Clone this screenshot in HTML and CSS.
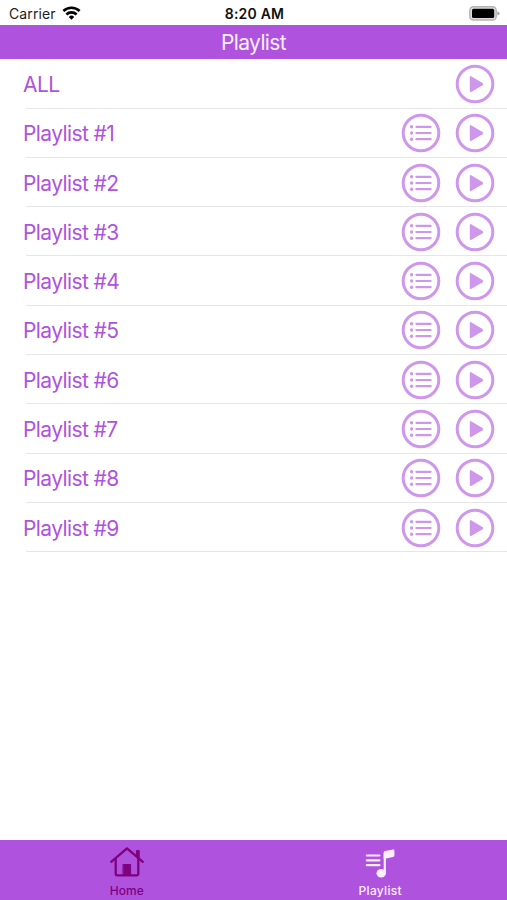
FILE: index.html
```
<!DOCTYPE html>
<html lang="en">
<head>
    <meta charset="UTF-8">
    <meta name="viewport" content="width=device-width, initial-scale=1.0">
    <title>Playlist</title>
    <link rel="stylesheet" href="styles.css">
</head>
<body>
    <svg class="sprite">
        <symbol id="icon-play" viewBox="0 0 40 40">
            <circle cx="20" cy="20" r="17.8" fill="none" stroke="currentColor" stroke-width="3"/>
            <path d="M14.8 13.1v14q0 1.4 1.3.8l11.4-6.6q1.4-1.2 0-2.4l-11.4-6.6q-1.3-.6-1.3.8z" fill="currentColor"/>
        </symbol>
        <symbol id="icon-list" viewBox="0 0 40 40">
            <circle cx="20" cy="20" r="17.8" fill="none" stroke="currentColor" stroke-width="3"/>
            <path d="M15.4 13.8h14.2M15.4 20h14.2M15.4 26.2h14.2" stroke="currentColor" stroke-width="2.2" stroke-linecap="round"/>
            <g fill="currentColor">
                <circle cx="10.6" cy="13.8" r="1.7"/>
                <circle cx="10.6" cy="20" r="1.7"/>
                <circle cx="10.6" cy="26.2" r="1.7"/>
            </g>
        </symbol>
    </svg>

    <div class="status-bar">
        <div class="carrier">
            Carrier
            <svg class="wifi" viewBox="0 0 18 14" fill="none" stroke="#000" stroke-width="2.6">
                <path d="M.9 5a11.6 11.6 0 0 1 16.2 0"/>
                <path d="M3.9 8.5a7.3 7.3 0 0 1 10.2 0"/>
                <path d="M9 13.8l-2.7-2.9a3.9 3.9 0 0 1 5.4 0z" fill="#000" stroke="none"/>
            </svg>
        </div>
        <div class="time">8:20 AM</div>
        <div class="battery">
            <svg viewBox="0 0 31 15">
                <rect x=".8" y=".8" width="26.4" height="13.2" rx="3.6" fill="#ddd" stroke="#b4b4b4" stroke-width="1.4"/>
                <rect x="3" y="2.8" width="22.2" height="9.2" rx="1.6" fill="#000"/>
                <path d="M28.4 5.2q2.2.7 2.2 2.2t-2.2 2.2z" fill="#a0a0a0"/>
            </svg>
        </div>
    </div>

    <h1 class="title">Playlist</h1>

    <ul class="playlists" id="playlists"></ul>

    <div class="tab-bar">
        <div class="tab tab-home">
            <svg viewBox="0 0 36 32" fill="none" stroke="currentColor" stroke-width="2.3" stroke-linecap="round" stroke-linejoin="round">
                <path d="M2.2 15.8L18 2.4l15.8 13.4"/>
                <path d="M6.7 13v14.6q0 1.7 1.7 1.7h19.2q1.7 0 1.7-1.7V13"/>
                <path d="M27.8 4.6h2.4v7.4l-2.4-2z" fill="currentColor" stroke-width="1"/>
                <path d="M14.4 18.5h7.2v10.8h-7.2z" fill="currentColor" stroke-width="1"/>
            </svg>
            <span>Home</span>
        </div>
        <div class="tab tab-playlist">
            <svg viewBox="0 0 36 32" stroke="currentColor" stroke-linecap="round">
                <path d="M4.8 9.5h12.6M4.8 14.3h12.6M4.8 19.2h12.6" fill="none" stroke-width="2.2"/>
                <path d="M22.8 27.4V7" fill="none" stroke-width="2.2" stroke-linecap="butt"/>
                <path d="M21.7 6.6q0-1.4 1.3-1.7l8-1.4q1.4-.2 1.4.9v5q0 1.2-1.4 1.5l-9.3 2z" fill="currentColor" stroke="none"/>
                <ellipse cx="19.2" cy="27.3" rx="4.7" ry="4.3" fill="currentColor" stroke="none"/>
            </svg>
            <span>Playlist</span>
        </div>
    </div>

    <script>
        const list = document.getElementById('playlists');
        const icon = name => `<svg class="icon"><use href="#icon-${name}"/></svg>`;

        for (let i = 0; i < 10; i++) {
            const row = document.createElement('li');
            row.className = 'row';
            row.innerHTML = `<span class="name">${i ? 'Playlist #' + i : 'ALL'}</span>` +
                (i ? icon('list') : '') + icon('play');
            list.appendChild(row);
        }
    </script>
</body>
</html>
```
FILE: styles.css
```
* {
    box-sizing: border-box;
}
body {
    margin: 0;
    height: 100vh;
    display: flex;
    flex-direction: column;
    overflow: hidden;
    background: #fff;
    font-family: Inter, "Liberation Sans", sans-serif;
}
.sprite {
    display: none;
}
.status-bar {
    display: grid;
    grid-template-columns: 1fr auto 1fr;
    align-items: center;
    height: 25.3px;
    padding: 2px 7px 0 9px;
    font-size: 14px;
    color: #222;
}
.carrier {
    display: flex;
    align-items: center;
    gap: 6px;
    letter-spacing: 0.1px;
}
.wifi {
    width: 19px;
    height: 14px;
    margin-top: -2px;
}
.time {
    font-size: 14px;
    font-weight: 600;
    letter-spacing: 0.2px;
    color: #111;
}
.battery {
    display: flex;
    justify-content: flex-end;
}
.battery svg {
    width: 31px;
    height: 15px;
}
.title {
    height: 34px;
    margin: 0;
    background: #af52de;
    color: #fbeeff;
    font-size: 21px;
    font-weight: 400;
    letter-spacing: -0.6px;
    line-height: 35px;
    text-align: center;
}
.playlists {
    flex: 1;
    margin: 0;
    padding: 0;
    list-style: none;
}
.row {
    display: flex;
    align-items: center;
    gap: 14px;
    height: 49.3px;
    padding: 0 12px 0 23px;
    background: linear-gradient(#e6e6e8, #e6e6e8) 26px 100% / 100% 1px no-repeat;
    color: #af52de;
}
.name {
    flex: 1;
    padding-top: 1px;
    font-size: 21px;
    letter-spacing: -0.6px;
}
.icon {
    width: 40px;
    height: 40px;
    color: #cf97eb;
}
.tab-bar {
    display: flex;
    height: 60px;
    background: #af52de;
}
.tab {
    flex: 1;
    display: flex;
    flex-direction: column;
    align-items: center;
    padding-top: 6px;
    font-size: 12px;
    font-weight: 500;
    line-height: 15px;
}
.tab svg {
    width: 36px;
    height: 32px;
    margin-bottom: 5px;
}
.tab-home {
    color: #800080;
}
.tab-playlist {
    color: #fbeeff;
}
.tab-playlist span {
    letter-spacing: 0.3px;
}
```
